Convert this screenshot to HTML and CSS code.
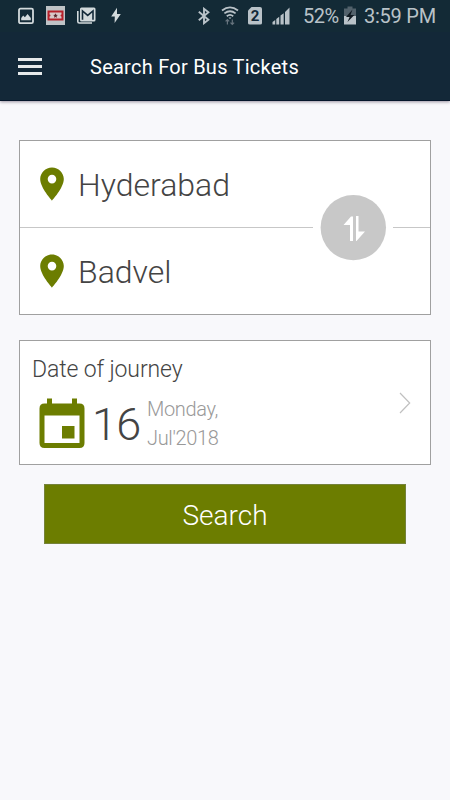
FILE: index.html
```html
<!DOCTYPE html>
<html lang="en">
<head>
<meta charset="utf-8">
<title>Search For Bus Tickets</title>
<link rel="stylesheet" href="styles.css">
</head>
<body>
<header class="top">
  <div class="status">
    <div class="status-left">
      <svg width="16" height="18" viewBox="0 0 16 18"><rect x="1" y="1.7" width="14" height="14.5" rx="1.5" fill="none" stroke="#d3dadc" stroke-width="1.8"/><path d="M3.2 13.2V11l2-2.5 1.7 1.7L9.6 7l3.2 4v2.2z" fill="#d3dadc"/></svg>
      <svg width="19" height="19" viewBox="0 0 19 19"><path d="M0 0h19v19H0z" fill="#bfc3c6"/><path d="M1.5 4.500h16v10h-16z" fill="#b7202a"/><path d="M3.500 6.500h12v2a1 1 0 0 0 0 2v2h-12v-2a1 1 0 0 0 0-2z" fill="#d8c7c8"/><path d="M9.500 7.300l.7 1.500 1.700.2-1.300 1.100.4 1.700-1.500-.8-1.500.8.4-1.700L7.100 9l1.700-.2z" fill="#5c2930"/></svg>
      <svg width="20" height="18" viewBox="0 0 20 18"><path d="M1.800 4v10.500q0 1.500 1.500 1.500H16" fill="none" stroke="#d3dadc" stroke-width="1.600"/><rect x="4" y=".500" width="15.500" height="14" rx="1.500" fill="#d3dadc"/><path d="M6.500 12.800V4l5.200 4.400L17 4v8.800" fill="none" stroke="#132939" stroke-width="1.600"/></svg>
      <svg width="10" height="17" viewBox="0 0 10 17"><path d="M6 .8L.2 9.500h3.600L3.600 16 9.800 7H6z" fill="#d3dadc"/></svg>
    </div>
    <div class="status-right">
      <svg class="bt" width="12" height="18" viewBox="0 0 12 18"><path d="M.8 4.800l9.600 8L6 16.200V1.800l4.400 3.400-9.600 8" fill="none" stroke="#b9c2c8" stroke-width="1.900"/></svg>
      <svg class="wifi" width="18" height="20" viewBox="0 0 18 20"><g fill="none" stroke="#b9c2c8" stroke-width="1.800"><path d="M1 4.500q8-6.200 16 0M3.400 7.400q5.600-4.300 11.200 0M5.800 10.200q3.200-2.600 6.400 0"/></g><path d="M7.500 11.500h3L9 13z" fill="#b9c2c8"/><path d="M6.400 18.500v-5M4.600 15.300l1.800-1.800 1.800 1.800M11.300 13.500v5m-1.800-1.800l1.800 1.800 1.800-1.800" fill="none" stroke="#67747e" stroke-width="1.200"/></svg>
      <span class="sim">2</span>
      <svg class="signal" width="18" height="18" viewBox="0 0 18 18"><path d="M.5 17.500v-2.400l2.700-2v4.400zM4.300 17.500V12l2.900-2.200v7.700zM8.500 17.500V8.600l3.200-2.400v11.300zM13 17.500V5L17.500.500v17z" fill="#b9c2c8"/></svg>
      <span class="pct">52%</span>
      <svg class="battery" width="12" height="19" viewBox="0 0 12 19"><path d="M0 2.500h3.500V.5h5v2H12v8H0z" fill="#52616b"/><path d="M0 10h12v8.500H0z" fill="#b9c2c8"/><path d="M8.500 3.500L2 11h3.600L3.500 16l6.800-7H6.500z" fill="#101a22"/></svg>
      <span class="clock">3:59 PM</span>
    </div>
  </div>
  <div class="bar">
    <svg class="menu" width="24" height="18" viewBox="0 0 24 18"><path d="M0 0h24v3H0zM0 7h24v3H0zM0 14h24v3H0z" fill="#e6e9ea"/></svg>
    <h1 class="title">Search For Bus Tickets</h1>
  </div>
</header>
<main class="content">
  <section class="card route">
    <div class="place">
      <svg class="pin" width="24" height="34" viewBox="0 0 24 34"><path fill-rule="evenodd" d="M12 .4C5.400.4.2 5.600.2 12.100.2 20.900 12 33.700 12 33.700s11.800-12.800 11.800-21.600C23.800 5.600 18.600.4 12 .4zm0 16a4.300 4.300 0 1 1 0-8.600 4.300 4.300 0 0 1 0 8.600z" fill="#6c7d00"/></svg>
      <span class="from">Hyderabad</span>
    </div>
    <div class="divider"></div>
    <div class="place">
      <svg class="pin" width="24" height="34" viewBox="0 0 24 34"><path fill-rule="evenodd" d="M12 .4C5.400.4.2 5.600.2 12.100.2 20.900 12 33.700 12 33.700s11.800-12.800 11.800-21.600C23.800 5.600 18.600.4 12 .4zm0 16a4.300 4.300 0 1 1 0-8.600 4.300 4.300 0 0 1 0 8.600z" fill="#6c7d00"/></svg>
      <span class="to">Badvel</span>
    </div>
    <svg class="swap" width="80" height="68" viewBox="0 0 80 68"><path d="M0 0h80v68H0z" fill="#fff"/><circle cx="40.300" cy="33.600" r="32.700" fill="#c8c8c8"/><path d="M40 47h-3V31h-6.500L38 22.500h2zM43 22h2.500v15.500h6.500L43.500 47H43z" fill="#fff"/></svg>
  </section>
  <section class="card journey">
    <div class="journey-info">
      <div class="label">Date of journey</div>
      <div class="date">
        <svg class="cal" width="46" height="51" viewBox="0 0 46 51"><path fill-rule="evenodd" d="M8 .5h5v5h20v-5h5v5h2.500q5 0 5 5v34.500q0 5-5 5h-35q-5 0-5-5v-34.500q0-5 5-5H8zM5.500 17.500V45h35V17.500z" fill="#6c7d00"/><path d="M23 28h12.500v12.500H23z" fill="#6c7d00"/></svg>
        <span class="day">16</span>
        <div class="month"><span class="weekday">Monday,</span><span class="year">Jul'2018</span></div>
      </div>
    </div>
    <svg class="chevron" width="12" height="22" viewBox="0 0 12 22"><path d="M1 1l9.700 10L1 21" fill="none" stroke="#c0c0c0" stroke-width="1.200"/></svg>
  </section>
  <button class="search"><span>Search</span></button>
</main>
</body>
</html>
```
FILE: styles.css
```css
* { box-sizing: border-box; }
body { margin: 0; background: #f8f8fb; font-family: Roboto, "Liberation Sans", sans-serif; height: 800px; overflow: hidden; }
svg { display: block; flex: none; }
span { white-space: nowrap; }
.top { height: 101px; background: #132838; border-bottom: 1px solid #06162b; box-shadow: 0 1px 3px #9a92a0; }
.status { height: 32px; display: flex; justify-content: space-between; background: #132a36; color: #b9c2c8; padding: 0 14px 0 18px; }
.status-left { display: flex; align-items: center; gap: 11px; height: 31px; }
.status-left svg:nth-child(2) { margin-left: 1px; }
.status-left svg:last-child { margin-left: 4px; }
.status-right { display: flex; align-items: center; height: 31px; }
.wifi { margin-left: 11px; }
.sim { margin-left: 9px; width: 14px; height: 18px; border-radius: 2px; background: #b9c2c8; color: #132838; font-size: 15px; line-height: 18px; font-weight: 700; text-align: center; clip-path: polygon(4px 0, 100% 0, 100% 100%, 0 100%, 0 4px); }
.signal { margin-left: 10px; }
.pct { width: 36px; margin-left: 13px; font-size: 20px; letter-spacing: -0.5px; }
.battery { margin-left: 5px; }
.clock { width: 72px; margin-left: 8px; font-size: 20px; letter-spacing: -0.25px; }
.bar { display: flex; align-items: center; height: 68px; padding-left: 18px; }
.menu { margin-top: 1px; }
.title { margin: 2px 0 0 48px; font-size: 20px; font-weight: 400; line-height: 24px; letter-spacing: 0.25px; color: #fff; }
.content { padding: 39px 19px 0; }
.card { background: #fff; border: 1px solid #a0a0a0; }
.route { position: relative; height: 175px; }
.place { height: 86px; display: flex; align-items: center; padding-left: 20px; font-size: 32px; font-weight: 300; color: #444; }
.place span { margin-top: 2px; }
.pin { margin-right: 14px; }
.divider { height: 1px; background: #c7c7c7; }
.swap { position: absolute; left: 293px; top: 53px; }
.journey { margin-top: 25px; height: 125px; display: flex; justify-content: space-between; padding: 0 19px 0 12px; }
.label { margin-top: 15px; font-size: 23px; line-height: 28px; font-weight: 300; letter-spacing: -0.12px; color: #444; }
.date { display: flex; align-items: center; margin-top: 13px; padding-left: 7px; height: 53px; }
.day { margin: 1px 0 0 7px; width: 47px; font-size: 45px; line-height: 53px; font-weight: 300; letter-spacing: -0.8px; color: #444; }
.month { margin-left: 8px; display: flex; flex-direction: column; font-size: 20px; line-height: 29px; font-weight: 300; letter-spacing: -0.35px; color: #999; }
.chevron { margin-top: 51px; }
.search { display: block; width: 362px; height: 60px; margin: 19px auto 0; padding: 3px 0 0; border: 1px solid #75823a; background: #6c7d00; color: #fff; font-family: inherit; font-size: 28px; font-weight: 300; }
```
